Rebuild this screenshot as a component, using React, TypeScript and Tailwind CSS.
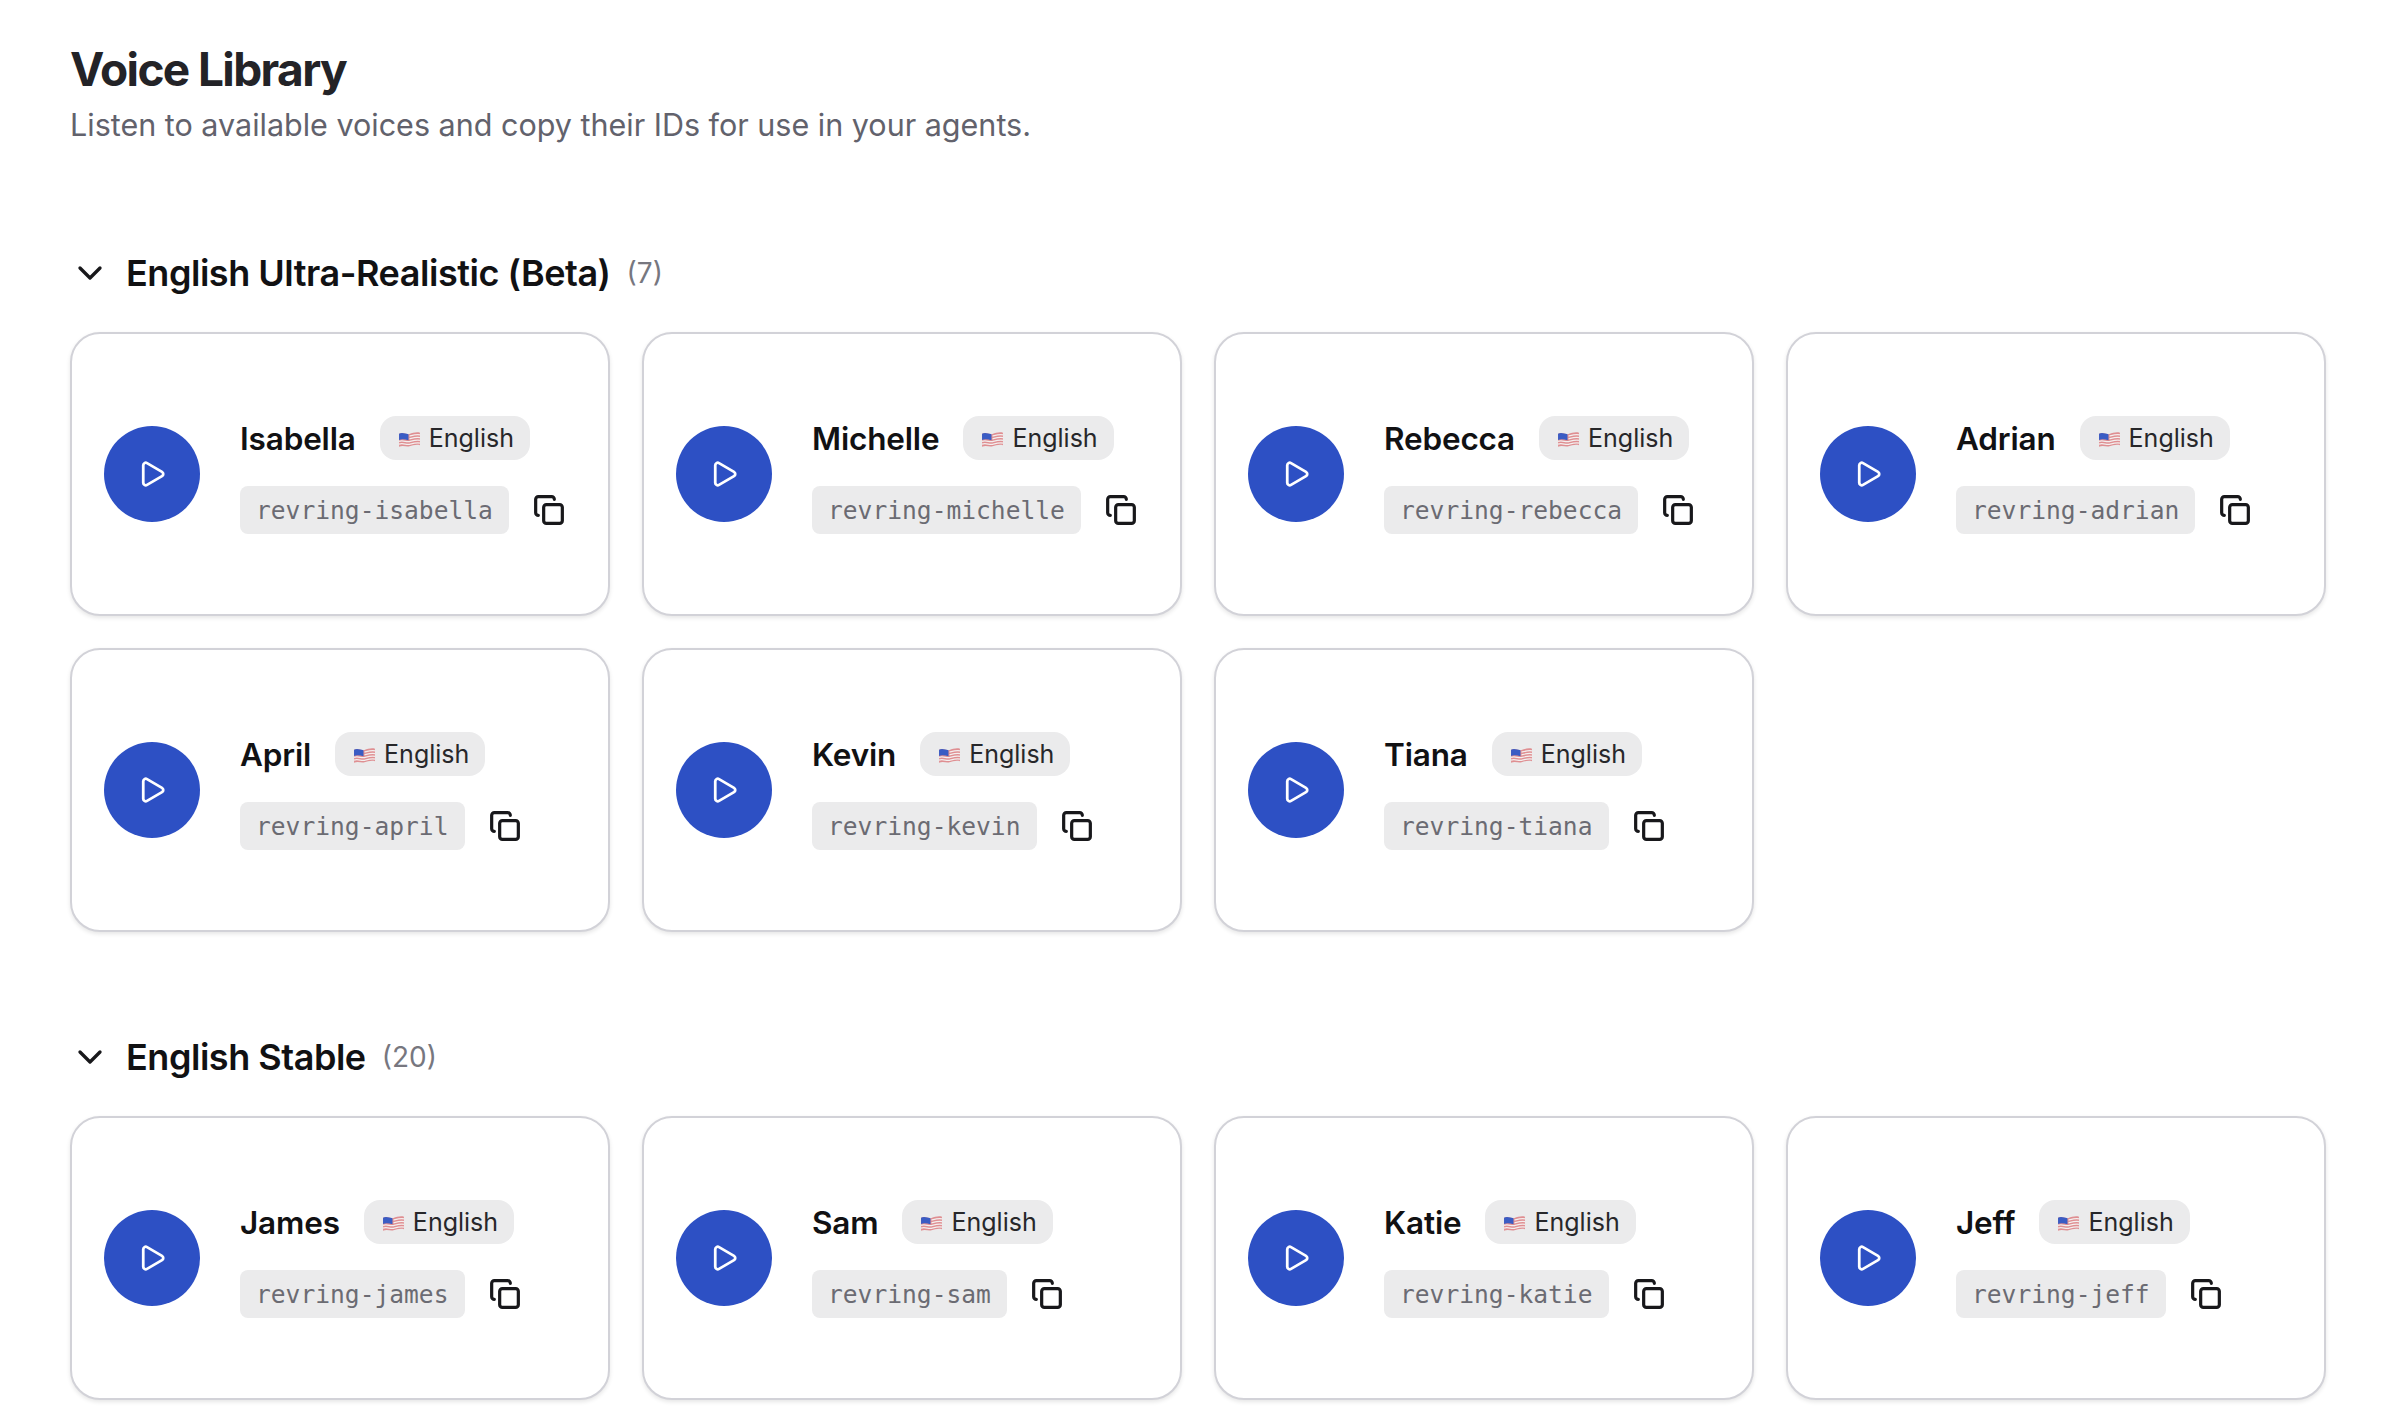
import { ChevronDown, Copy, Play } from "lucide-react";

function Flag() {
  return (
    <svg width="23" height="19" viewBox="0 0 22 18" className="shrink-0">
      <path d="M1 3.5C5 1.5 8 5 11 3.8S18 1.5 21 2.5V14.5C18 13.5 14 14.5 11 15.5S5 14 1 16Z" fill="#df8f92" />
      <path d="M11 5.8C14 5 18 3.8 21 4.6M11 8.4C14 7.6 18 6.4 21 7.2M1 10.8C5 9.4 8 11.8 11 11S18 9 21 9.8M1 13.4C5 12 8 14.4 11 13.6S18 11.6 21 12.4" stroke="#f4efef" strokeWidth="1.2" fill="none" />
      <path d="M1 3.5C4 2 7 3.5 10 4V9.6C7 9 4 8 1 9.4Z" fill="#3a5cc4" />
    </svg>
  );
}

function Card({ name, id }: { name: string; id: string }) {
  return (
    <div className="h-[284px] rounded-[30px] border-2 border-[#d2d2d8] bg-white shadow-[0_2px_4px_rgba(0,0,0,0.1)] flex items-center pl-[32px] gap-[40px]">
      <button className="w-[96px] h-[96px] rounded-full bg-[#2d50c4] flex items-center justify-center shrink-0">
        <Play size={30} color="#ffffff" strokeWidth={2.2} />
      </button>
      <div className="flex flex-col gap-[26px] pt-[2px]">
        <div className="flex items-center gap-[24px]">
          <span className="pt-[2px] text-[31.5px] leading-[42px] font-semibold tracking-[-0.005em] text-[#111113]">{name}</span>
          <span className="h-[44px] pt-[2px] rounded-[16px] bg-[#ebebec] flex items-center gap-[8px] pl-[18px] pr-[16px] text-[25px] text-[#27272a]">
            <Flag />
            English
          </span>
        </div>
        <div className="flex items-center gap-[24px]">
          <code className="h-[48px] pt-[2px] rounded-[8px] bg-[#ebebec] flex items-center px-[16px] text-[24.6px] text-[#6b6b73] [font-family:'DejaVu_Sans_Mono',monospace]">{id}</code>
          <Copy size={32} color="#18181b" strokeWidth={2.4} />
        </div>
      </div>
    </div>
  );
}

function Section({ title, count, voices }: { title: string; count: number; voices: string[] }) {
  return (
    <section>
      <div className="flex items-center h-[44px] mb-[37px]">
        <ChevronDown size={40} color="#18181b" strokeWidth={2} className="mr-[16px]" />
        <h2 className="text-[36px] font-semibold text-[#111113] tracking-[-0.013em]">{title}</h2>
        <span className="ml-[16px] text-[28px] text-[#77777f]">({count})</span>
      </div>
      <div className="grid grid-cols-4 gap-[32px]">
        {voices.map((v) => (
          <Card key={v} name={v} id={"revring-" + v.toLowerCase()} />
        ))}
      </div>
    </section>
  );
}

export default function App() {
  return (
    <div className="h-[1428px] overflow-hidden bg-white pl-[70px] pr-[68px] pt-[40px] [font-family:Inter,sans-serif]">
      <h1 className="text-[46px] leading-[58px] font-bold tracking-[-0.035em] text-[#232327]">Voice Library</h1>
      <p className="mt-[5px] text-[30.5px] leading-[44px] text-[#62626c]">Listen to available voices and copy their IDs for use in your agents.</p>
      <div className="mt-[104px] flex flex-col gap-[103px]">
        <Section title="English Ultra-Realistic (Beta)" count={7} voices={["Isabella", "Michelle", "Rebecca", "Adrian", "April", "Kevin", "Tiana"]} />
        <Section title="English Stable" count={20} voices={["James", "Sam", "Katie", "Jeff"]} />
      </div>
    </div>
  );
}
